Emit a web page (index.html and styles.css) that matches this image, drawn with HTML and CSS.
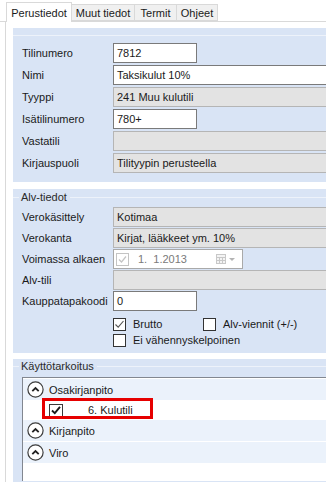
FILE: index.html
```html
<!DOCTYPE html>
<html lang="fi">
<head>
    <meta charset="UTF-8">
    <meta name="viewport" content="width=device-width, initial-scale=1.0">
    <title>Tilin tiedot</title>
    <link rel="stylesheet" href="styles.css">
</head>
<body>
    <div class="tabs">
        <div class="tab active">Perustiedot</div>
        <div class="tab tab-muut">Muut tiedot</div>
        <div class="tab tab-termit">Termit</div>
        <div class="tab tab-ohjeet">Ohjeet</div>
    </div>

    <div class="page">
        <section class="panel panel-main">
            <div class="group-line"></div>
            <div class="rows rows-main">
                <div class="row"><span class="label">Tilinumero</span><div class="field input short">7812</div></div>
                <div class="row"><span class="label">Nimi</span><div class="field input wide">Taksikulut 10%</div></div>
                <div class="row"><span class="label">Tyyppi</span><div class="field readonly wide">241 Muu kulutili</div></div>
                <div class="row"><span class="label">Isätilinumero</span><div class="field input short">780+</div></div>
                <div class="row"><span class="label">Vastatili</span><div class="field readonly wide"></div></div>
                <div class="row"><span class="label">Kirjauspuoli</span><div class="field readonly wide">Tilityypin perusteella</div></div>
            </div>
        </section>

        <section class="panel panel-alv">
            <div class="caption">Alv-tiedot</div>
            <div class="rows rows-alv">
                <div class="row"><span class="label">Verokäsittely</span><div class="field readonly wide">Kotimaa</div></div>
                <div class="row"><span class="label">Verokanta</span><div class="field readonly wide">Kirjat, lääkkeet ym. 10%</div></div>
                <div class="row">
                    <span class="label">Voimassa alkaen</span>
                    <div class="field date">
                        <span class="box box-disabled">
                            <svg width="11" height="11" viewBox="0 0 11 11"><polyline points="2,5.5 4.5,8 9,2.5" fill="none" stroke="#c4c4c4" stroke-width="1.2"/></svg>
                        </span>
                        <span class="date-text">1.&nbsp;&nbsp;1.2013</span>
                        <svg class="cal" width="22" height="12" viewBox="0 0 22 12">
                            <rect x="0.5" y="1.5" width="9" height="9" fill="#f4f4f4" stroke="#c8c8c8"/>
                            <line x1="0.5" y1="4.5" x2="9.5" y2="4.5" stroke="#c8c8c8"/>
                            <line x1="0.5" y1="7.5" x2="9.5" y2="7.5" stroke="#c8c8c8"/>
                            <line x1="3.5" y1="4.5" x2="3.5" y2="10.5" stroke="#c8c8c8"/>
                            <line x1="6.5" y1="4.5" x2="6.5" y2="10.5" stroke="#c8c8c8"/>
                            <polygon points="13,5 19,5 16,8" fill="#b4b4b4"/>
                        </svg>
                    </div>
                </div>
                <div class="row"><span class="label">Alv-tili</span><div class="field readonly wide"></div></div>
                <div class="row"><span class="label">Kauppatapakoodi</span><div class="field input short">0</div></div>
            </div>
            <div class="checks">
                <div class="check-row">
                    <label class="check check-first">
                        <span class="box">
                            <svg width="11" height="11" viewBox="0 0 11 11"><polyline points="1.5,5.5 4.2,8.2 9.5,2" fill="none" stroke="#555" stroke-width="1.1"/></svg>
                        </span>
                        Brutto
                    </label>
                    <label class="check"><span class="box"></span>Alv-viennit (+/-)</label>
                </div>
                <div class="check-row">
                    <label class="check"><span class="box"></span>Ei vähennyskelpoinen</label>
                </div>
            </div>
        </section>

        <section class="panel panel-use">
            <div class="caption">Käyttötarkoitus</div>
            <div class="tree">
                <div class="node">
                    <svg class="toggle" width="17" height="17" viewBox="0 0 17 17"><circle cx="8.5" cy="8.5" r="7.6" fill="#fff" stroke="#3c3c3c" stroke-width="1.2"/><polyline points="5.3,10.2 8.5,7 11.7,10.2" fill="none" stroke="#222" stroke-width="1.8"/></svg>
                    Osakirjanpito
                </div>
                <div class="leaf">
                    <span class="box box-tree">
                        <svg width="12" height="12" viewBox="0 0 12 12"><polyline points="2,6.5 4.8,9.2 10,2.8" fill="none" stroke="#1a1a1a" stroke-width="1.9"/></svg>
                    </span>
                    <span class="leaf-text">6. Kulutili</span>
                    <div class="highlight"></div>
                </div>
                <div class="node">
                    <svg class="toggle" width="17" height="17" viewBox="0 0 17 17"><circle cx="8.5" cy="8.5" r="7.6" fill="#fff" stroke="#3c3c3c" stroke-width="1.2"/><polyline points="5.3,10.2 8.5,7 11.7,10.2" fill="none" stroke="#222" stroke-width="1.8"/></svg>
                    Kirjanpito
                </div>
                <div class="node">
                    <svg class="toggle" width="17" height="17" viewBox="0 0 17 17"><circle cx="8.5" cy="8.5" r="7.6" fill="#fff" stroke="#3c3c3c" stroke-width="1.2"/><polyline points="5.3,10.2 8.5,7 11.7,10.2" fill="none" stroke="#222" stroke-width="1.8"/></svg>
                    Viro
                </div>
            </div>
        </section>
    </div>
</body>
</html>
```

FILE: styles.css
```css
body {
    margin: 0;
    width: 326px;
    height: 482px;
    overflow: hidden;
    background: #fff;
    color: #1a1a1a;
    font-family: "Liberation Sans", Arial, sans-serif;
    font-size: 11px;
}

/* tab strip */
.tabs {
    display: flex;
    align-items: flex-end;
    height: 21px;
    padding-left: 6px;
    border-bottom: 1px solid #d9d9d9;
}

.tab {
    box-sizing: border-box;
    height: 17px;
    display: flex;
    align-items: center;
    justify-content: center;
    background: #f0f0f0;
    border: 1px solid #d9d9d9;
    border-left: none;
    position: relative;
}

.tab.active {
    height: 20px;
    width: 66px;
    background: #fff;
    border-left: 1px solid #d9d9d9;
    border-bottom: none;
    margin-bottom: -1px;
    z-index: 1;
}

.tab-muut { width: 63px; }
.tab-termit { width: 42px; }
.tab-ohjeet { width: 41px; }

/* page */
.page {
    box-sizing: border-box;
    margin-left: 5px;
    border-left: 1px solid #d9d9d9;
    padding: 6px 0 0 7px;
    height: 460px;
}

.panel {
    background: #d9e4f5;
}

.panel-main {
    padding-top: 7px;
    padding-bottom: 9px;
}

.panel-alv {
    margin-top: 7px;
    padding-top: 2px;
    padding-bottom: 5px;
}

.panel-use {
    margin-top: 6px;
    padding-top: 1px;
    height: 122px;
}

.group-line {
    height: 1px;
    background: #edf2fa;
}

.caption {
    display: flex;
    align-items: center;
    height: 12px;
    color: #2a2a2a;
}

.caption::before {
    content: "";
    width: 6px;
    height: 1px;
    margin-right: 2px;
    background: #edf2fa;
}

.caption::after {
    content: "";
    flex: 1;
    height: 1px;
    margin-left: 3px;
    background: #edf2fa;
}

.rows {
    display: flex;
    flex-direction: column;
    padding-left: 9px;
}

.rows-main {
    padding-top: 7px;
    gap: 2px;
}

.rows-alv {
    padding-top: 4px;
    gap: 1px;
}

.row {
    display: flex;
    align-items: center;
    height: 20px;
}

.label {
    width: 91px;
    flex: none;
    white-space: nowrap;
}

.field {
    box-sizing: border-box;
    height: 20px;
    display: flex;
    align-items: center;
    padding-left: 3px;
    border: 1px solid #b5b5b5;
    white-space: nowrap;
}

.field.input {
    background: #fff;
    border-color: #7a7a7a;
}

.field.readonly {
    background: #e3e3e3;
}

.short {
    width: 84px;
}

.wide {
    flex: 1;
    margin-right: -10px;
}

.field.date {
    width: 130px;
    background: #fff;
    border-color: #a9a9a9;
    color: #7a7a7a;
    padding-left: 2px;
}

.date-text {
    margin-left: 9px;
}

.cal {
    margin-left: auto;
    margin-right: 4px;
}

/* checkboxes */
.checks {
    padding-left: 100px;
    margin-top: 5px;
}

.check-row {
    display: flex;
    align-items: center;
    height: 16px;
}

.check {
    display: flex;
    align-items: center;
    gap: 7px;
}

.check-first {
    width: 90px;
}

.box {
    box-sizing: border-box;
    width: 13px;
    height: 13px;
    border: 1px solid #333;
    background: #fff;
    display: flex;
    align-items: center;
    justify-content: center;
    flex: none;
}

.box-disabled {
    border-color: #c4c4c4;
}

/* tree */
.tree {
    box-sizing: border-box;
    margin-top: 5px;
    margin-left: 9px;
    height: 104px;
    border: 1px solid #828790;
    border-right: none;
    border-bottom: none;
    background: #fff;
    padding-top: 1px;
}

.node {
    height: 21px;
    margin-bottom: 1px;
    display: flex;
    align-items: center;
    gap: 5px;
    padding-left: 4px;
    background: #ebf2fb;
}

.leaf {
    position: relative;
    height: 18px;
    margin-bottom: 1px;
    display: flex;
    align-items: center;
    padding-left: 26px;
}

.box-tree {
    width: 14px;
    height: 13px;
    border-color: #3a3a3a;
}

.leaf-text {
    margin-left: 25px;
}

.highlight {
    position: absolute;
    left: 19px;
    top: -3px;
    width: 111px;
    height: 21px;
    box-sizing: border-box;
    border: 3px solid #e60000;
}
```
